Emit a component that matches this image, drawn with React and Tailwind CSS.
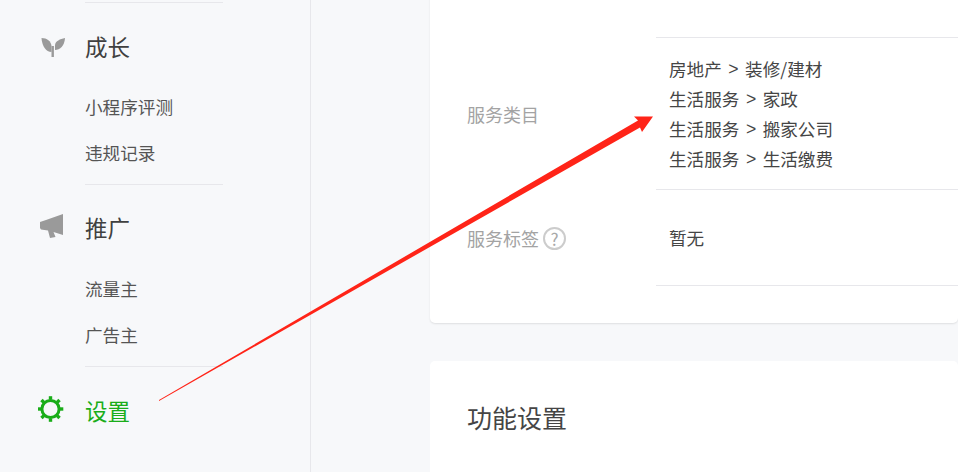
const font = { fontFamily: '"Noto Sans CJK SC", "Liberation Sans", sans-serif' };

const SproutIcon = () => (
  <svg className="mt-[5px]" width="28" height="20" viewBox="38 38 28 20" fill="#9a9a9a">
    <path d="M41.5 38 C47 38 51 41 51.5 46 L51.5 52 C46 52 42 46 41.5 38 Z" />
    <path d="M65 38 C60 39 55.5 41 55 45 L55 50 C60 50 64.5 46 65 38 Z" />
    <rect x="51.5" y="46" width="2.4" height="11" />
  </svg>
);

const MegaphoneIcon = () => (
  <svg width="28" height="26" viewBox="38 213 28 26" fill="#9a9a9a">
    <path d="M40 222 L46 220 L63 214 L63 235 L53.5 232 L55.5 237 L50 238 L48 230.5 L41 229.5 L40 228 Z" />
  </svg>
);

const GearIcon = () => (
  <svg width="28" height="28" viewBox="-12.5 -14 28 28" fill="#1aad19">
    <circle cx="0" cy="0" r="8.6" fill="none" stroke="#1aad19" strokeWidth="3" />
    {[0, 45, 90, 135, 180, 225, 270, 315].map((deg) => (
      <rect key={deg} x="-1.7" y="-12.8" width="3.4" height="3.4" transform={`rotate(${deg})`} />
    ))}
  </svg>
);

const Section = ({ icon, title, active, items, gap }) => (
  <div>
    <div className="flex items-center h-[44px]">
      <div className="w-[85px] pl-[38px] flex shrink-0">{icon}</div>
      <span className={`text-[22.5px] pt-[3px] ${active ? "text-[#1aad19]" : "text-[#404040]"}`}>{title}</span>
    </div>
    {items && (
      <div className="pl-[85px] pb-0" style={{ paddingTop: gap }}>
        {items.map((item) => (
          <div key={item} className="h-[46px] flex items-center text-[17.6px] text-[#555555]">
            {item}
          </div>
        ))}
        <div className="w-[138px] h-px bg-[#e7e7eb] mt-[8px]" />
      </div>
    )}
  </div>
);

const Category = ({ parent, child }) => (
  <div className="flex">
    {parent}
    <span className="mx-[6.5px] font-['Liberation_Sans'] text-[17.6px]">&gt;</span>
    {child}
  </div>
);

export default function App() {
  return (
    <div className="relative flex w-[958px] h-[472px] overflow-hidden bg-[#f7f8fa]" style={font}>
      <aside className="w-[311px] shrink-0 border-r border-[#e7e7eb] pt-[2px]">
        <div className="ml-[85px] w-[138px] h-px bg-[#e7e7eb]" />
        <div className="pt-[20px]">
          <Section icon={<SproutIcon />} title="成长" gap={17} items={["小程序评测", "违规记录"]} />
        </div>
        <div className="pt-[19px]">
          <Section icon={<MegaphoneIcon />} title="推广" gap={18} items={["流量主", "广告主"]} />
        </div>
        <div className="pt-[20px]">
          <Section active icon={<GearIcon />} title="设置" />
        </div>
      </aside>

      <main className="flex-1 pl-[119px]">
        <section className="-mt-[20px] bg-white rounded-[5px] shadow-[0_1px_2px_rgba(0,0,0,0.1)] h-[343px] pl-[37px] pt-[57px]">
          <div className="flex">
            <div className="w-[189px] shrink-0 flex items-center text-[18px] text-[#a3a3a3] pt-[2px]">服务类目</div>
            <div className="flex-1 border-t border-[#e7e7eb] h-[152px] pl-[13px] pt-[16px] text-[17.6px] leading-[30px] text-[#454545]">
              <Category parent="房地产" child="装修/建材" />
              <Category parent="生活服务" child="家政" />
              <Category parent="生活服务" child="搬家公司" />
              <Category parent="生活服务" child="生活缴费" />
            </div>
          </div>
          <div className="flex">
            <div className="w-[189px] shrink-0 flex items-center text-[18px] text-[#a3a3a3] pt-[2px]">
              服务标签
              <span className="ml-[4px] w-[23px] h-[23px] rounded-full border-2 border-[#cccccc] flex items-center justify-center text-[17px] leading-none text-[#a8a8a8]">?</span>
            </div>
            <div className="flex-1 border-t border-b border-[#e7e7eb] h-[97px] pl-[13px] pt-[33px] text-[17.6px] leading-[30px] text-[#454545]">
              暂无
            </div>
          </div>
        </section>

        <section className="mt-[38px] bg-white rounded-[5px] h-[200px] pl-[37px] pt-[36px] text-[25px] leading-[40px] text-[#454545]">
          功能设置
        </section>
      </main>

      {/* red annotation arrow */}
      <svg className="absolute left-0 top-0 pointer-events-none" width="958" height="472" viewBox="0 0 958 472">
        <path fill="#ff2418" d="M159 400 L638 120.5 L634 116.5 L653 116.5 L642 132 L640 127.5 L159 401 Z" />
      </svg>
    </div>
  );
}
